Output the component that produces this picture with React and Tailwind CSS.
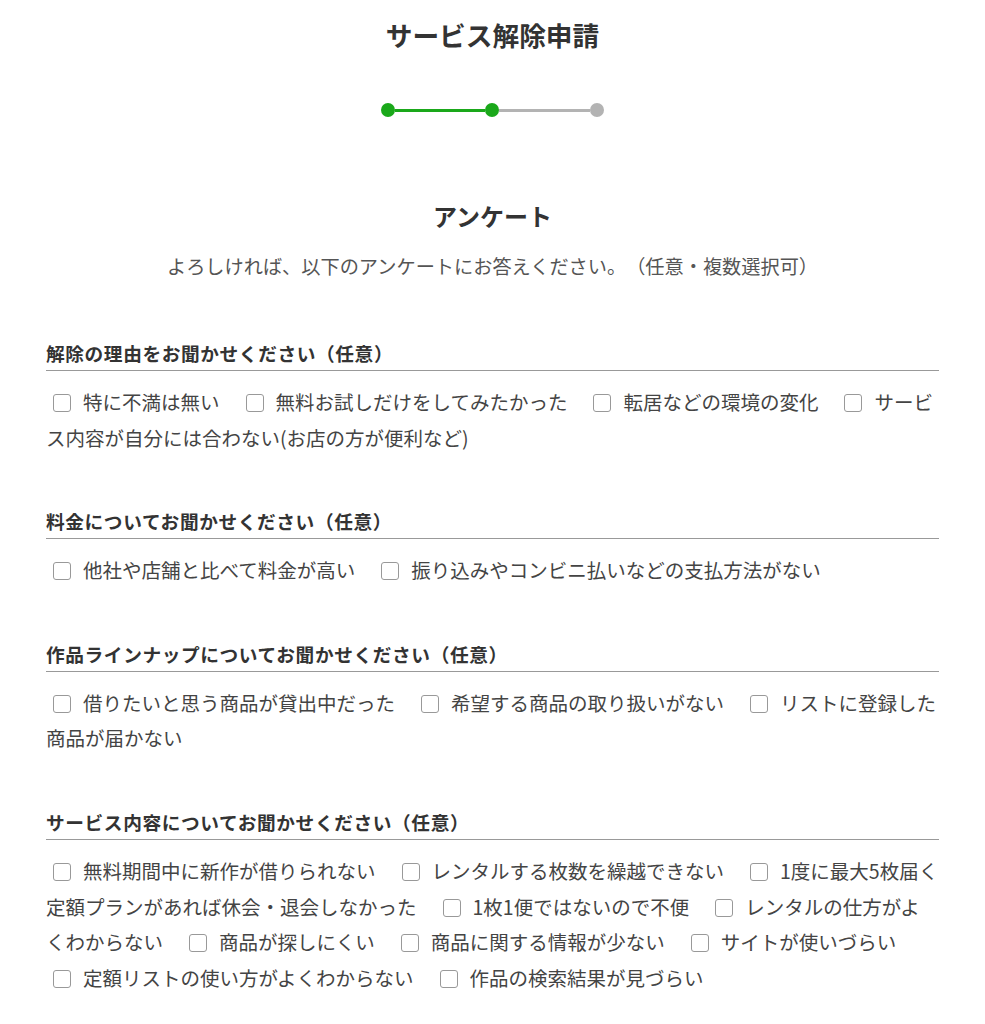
// Service cancellation — survey step.

const sections = [
  {
    title: '解除の理由をお聞かせください（任意）',
    options: [
      '特に不満は無い',
      '無料お試しだけをしてみたかった',
      '転居などの環境の変化',
      'サービス内容が自分には合わない(お店の方が便利など)',
    ],
  },
  {
    title: '料金についてお聞かせください（任意）',
    options: ['他社や店舗と比べて料金が高い', '振り込みやコンビニ払いなどの支払方法がない'],
  },
  {
    title: '作品ラインナップについてお聞かせください（任意）',
    options: ['借りたいと思う商品が貸出中だった', '希望する商品の取り扱いがない', 'リストに登録した商品が届かない'],
  },
  {
    title: 'サービス内容についてお聞かせください（任意）',
    options: [
      '無料期間中に新作が借りられない',
      'レンタルする枚数を繰越できない',
      '1度に最大5枚届く定額プランがあれば休会・退会しなかった',
      '1枚1便ではないので不便',
      'レンタルの仕方がよくわからない',
      '商品が探しにくい',
      '商品に関する情報が少ない',
      'サイトが使いづらい',
      '定額リストの使い方がよくわからない',
      '作品の検索結果が見づらい',
    ],
  },
];

function Stepper() {
  return (
    <div className="flex items-center justify-center">
      <span className="h-[14px] w-[14px] rounded-full bg-[#1aa81a]" />
      <span className="h-[3px] w-[90px] bg-[#1aa81a]" />
      <span className="h-[14px] w-[14px] rounded-full bg-[#1aa81a]" />
      <span className="h-[3px] w-[91px] bg-[#b3b3b3]" />
      <span className="h-[14px] w-[14px] rounded-full bg-[#b3b3b3]" />
    </div>
  );
}

function Option({ label }) {
  return (
    <label className="mr-[19px] cursor-pointer">
      <span className="ml-[7px] mr-[12px] inline-block h-[18px] w-[18px] rounded-[3px] border border-[#999] bg-white align-[-2px]" />
      {label}
    </label>
  );
}

function Section({ title, options, first }) {
  return (
    <section className={first ? 'mt-[60px]' : 'mt-[53px]'}>
      <h3 className="border-b border-[#999] pb-[4px] text-[18.7px] font-bold leading-[26px] tracking-[0.6px] text-[#333]">{title}</h3>
      <div className="mt-[13px] break-all text-[19.5px] leading-[35.6px] text-[#444]">
        {options.map((o) => <Option key={o} label={o} />)}
      </div>
    </section>
  );
}

export default function App() {
  return (
    <div
      className="min-h-screen bg-white pb-10 text-[#333] [text-spacing-trim:space-all]"
      style={{ fontFamily: '"Noto Sans CJK JP", "Noto Sans", sans-serif' }}
    >
      <div className="mx-auto w-[893px] pt-[17px]">
        <h1 className="text-center text-[26.7px] font-bold leading-[36px] text-[#333]">サービス解除申請</h1>
        <div className="mt-[50px]"><Stepper /></div>
        <h2 className="mt-[83px] text-center text-[24px] font-bold leading-[32px] text-[#333]">アンケート</h2>
        <p className="mt-[20px] text-center text-[19.2px] leading-[28px] text-[#555]">
          よろしければ、以下のアンケートにお答えください。（任意・複数選択可）
        </p>
        {sections.map((s, i) => <Section key={s.title} first={i === 0} {...s} />)}
      </div>
    </div>
  );
}
